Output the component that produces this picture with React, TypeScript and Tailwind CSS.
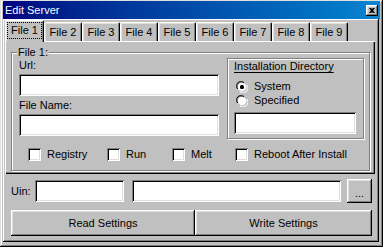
import React from "react";

const raised =
  "shadow-[inset_-1px_-1px_#000,inset_1px_1px_#fff,inset_-2px_-2px_#808080,inset_2px_2px_#dfdfdf]";
const sunken =
  "shadow-[inset_1px_1px_#808080,inset_-1px_-1px_#fff,inset_2px_2px_#000,inset_-2px_-2px_#dfdfdf]";
const etched = "border border-[#808080] shadow-[inset_1px_1px_#fff,1px_1px_#fff]";

const tabs = ["File 1", "File 2", "File 3", "File 4", "File 5", "File 6", "File 7", "File 8", "File 9"];

function TextBox({ className }: { className: string }) {
  return <div className={`bg-white h-[22px] ${sunken} ${className}`} />;
}

function CheckBox({ label, width }: { label: string; width: string }) {
  return (
    <div className={`flex items-center gap-[6px] h-[13px] ${width}`}>
      <span className={`w-[13px] h-[13px] bg-white shrink-0 ${sunken}`} />
      <span className="leading-[13px] whitespace-nowrap">{label}</span>
    </div>
  );
}

function Radio({ label, checked }: { label: string; checked?: boolean }) {
  return (
    <div className="flex items-center h-[13px] pl-[8px] gap-[6px]">
      <svg width="12" height="12" viewBox="0 0 12 12" className="shrink-0">
        <path d="M1 8 A5 5 0 0 1 8 1" fill="none" stroke="#808080" strokeWidth="1" />
        <path d="M2 8 A4 4 0 0 1 8 2" fill="none" stroke="#000" strokeWidth="1" />
        <circle cx="6" cy="6" r="4" fill="#fff" />
        <path d="M4 11 A5 5 0 0 0 11 4" fill="none" stroke="#fff" strokeWidth="1" />
        <path d="M4 10 A4 4 0 0 0 10 4" fill="none" stroke="#dfdfdf" strokeWidth="1" />
        {checked && <rect x="4" y="4" width="4" height="4" rx="1.5" fill="#000" />}
      </svg>
      <span className="leading-[13px]">{label}</span>
    </div>
  );
}

export default function App() {
  return (
    <div
      className={`w-[383px] h-[247px] bg-[#c0c0c0] flex flex-col pt-[1px] px-[3px] pb-[5px] overflow-hidden text-[11px] text-black font-['Liberation_Sans',Arial,sans-serif] shadow-[inset_-1px_-1px_#000,inset_1px_1px_#dfdfdf,inset_-2px_-2px_#808080,inset_2px_2px_#fff]`}
    >
      {/* Title bar */}
      <div className="h-[18px] shrink-0 flex items-center justify-between pl-[2px] pr-[2px] bg-gradient-to-r from-[#000080] to-[#1084d0]">
        <span className="text-white leading-[13px]">Edit Server</span>
        <div className={`w-[12px] h-[11px] bg-[#c0c0c0] flex items-center justify-center ${raised}`}>
          <svg width="6" height="5" viewBox="0 0 6 5">
            <path d="M0 0h2l1 1 1-1h2L4 2.5 6 5H4L3 4 2 5H0l2-2.5z" fill="#000" />
          </svg>
        </div>
      </div>

      {/* Client frame */}
      <div className="flex-1 mr-[1px] flex flex-col pt-[1px] pl-[1px] shadow-[inset_-1px_-1px_#000,inset_1px_1px_#fff,inset_-2px_-2px_#808080]">
        {/* Tabs */}
        <div className="h-[21px] flex items-end pl-[1px] relative z-10">
          {tabs.map((t, i) =>
            i === 0 ? (
              <div
                key={t}
                className="w-[39px] h-[22px] -mb-[1px] bg-[#c0c0c0] border-l border-t border-r border-white border-r-black rounded-t-[2px] shadow-[inset_-1px_0_#808080,inset_1px_1px_#dfdfdf] flex items-start justify-center pt-[1px]"
              >
                <span className="border border-dotted border-black w-[35px] h-[17px] flex items-center justify-center leading-[13px]">
                  {t}
                </span>
              </div>
            ) : (
              <div
                key={t}
                className="w-[38px] h-[19px] bg-[#c0c0c0] border-l border-t border-r border-white border-r-black rounded-t-[2px] shadow-[inset_-1px_0_#808080,inset_1px_1px_#dfdfdf] flex items-center justify-center leading-[13px]"
              >
                {t}
              </div>
            )
          )}
        </div>

        {/* Tab panel */}
        <div className="w-[370px] h-[133px] ml-[1px] pt-[11px] pl-[6px] shadow-[inset_1px_1px_#fff,inset_-1px_-1px_#000,inset_-2px_-2px_#808080]">
          <div className={`relative w-[359px] h-[119px] ${etched}`}>
            <span className="absolute left-[5px] -top-[7px] px-[1px] bg-[#c0c0c0] leading-[13px]">File 1:</span>

            <div className="flex">
              {/* Left column */}
              <div className="ml-[7px] w-[200px] flex flex-col">
                <span className="mt-[6px] leading-[13px]">Url:</span>
                <TextBox className="mt-[2px] w-[200px]" />
                <span className="mt-[3px] leading-[13px]">File Name:</span>
                <TextBox className="mt-[2px] w-[200px]" />
              </div>

              {/* Installation Directory */}
              <div className={`ml-[8px] mt-[5px] w-[137px] h-[81px] flex flex-col ${etched}`}>
                <span className="mt-[1px] pl-[6px] leading-[13px] underline underline-offset-[2px]">
                  Installation Directory
                </span>
                <div className="mt-[7px]">
                  <Radio label="System" checked />
                </div>
                <div className="mt-[1px]">
                  <Radio label="Specified" />
                </div>
                <TextBox className="mt-[5px] ml-[6px] w-[122px]" />
              </div>
            </div>

            {/* Checkboxes */}
            <div className="flex mt-[9px] pl-[16px]">
              <CheckBox label="Registry" width="w-[79px]" />
              <CheckBox label="Run" width="w-[65px]" />
              <CheckBox label="Melt" width="w-[63px]" />
              <CheckBox label="Reboot After Install" width="w-[120px]" />
            </div>
          </div>
        </div>

        {/* Uin row */}
        <div className="h-[24px] mt-[5px] pl-[7px] flex items-center">
          <span className="w-[24px] leading-[13px]">Uin:</span>
          <TextBox className="w-[89px]" />
          <TextBox className="ml-[8px] w-[209px]" />
          <div className={`ml-[6px] w-[25px] h-[24px] flex items-end justify-center pb-[5px] leading-[10px] ${raised}`}>
            ...
          </div>
        </div>

        {/* Buttons */}
        <div className="h-[26px] mt-[7px] pl-[7px] flex">
          <div className={`w-[184px] h-[26px] flex items-center justify-center leading-[13px] ${raised}`}>
            Read Settings
          </div>
          <div className={`ml-[0px] w-[177px] h-[26px] flex items-center justify-center leading-[13px] ${raised}`}>
            Write Settings
          </div>
        </div>
      </div>
    </div>
  );
}
